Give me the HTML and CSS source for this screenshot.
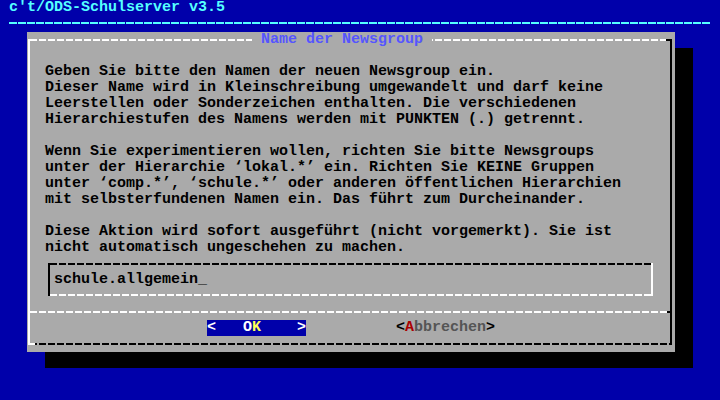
FILE: index.html
```html
<!DOCTYPE html>
<html lang="de">

<head>
    <meta charset="UTF-8">
    <meta name="viewport" content="width=device-width, initial-scale=1.0">
    <title>c't/ODS-Schulserver</title>
    <link rel="stylesheet" href="styles.css">
</head>

<body>
    <div class="screen">
        <div class="banner">c't/ODS-Schulserver v3.5</div>
        <div class="rule"></div>

        <!-- Eingabedialog -->
        <div class="dialog">
            <div class="frame">
                <div class="caption"> Name der Newsgroup </div>

                <p>Geben Sie bitte den Namen der neuen Newsgroup ein.<br>
                    Dieser Name wird in Kleinschreibung umgewandelt und darf keine<br>
                    Leerstellen oder Sonderzeichen enthalten. Die verschiedenen<br>
                    Hierarchiestufen des Namens werden mit PUNKTEN (.) getrennt.</p>

                <p>Wenn Sie experimentieren wollen, richten Sie bitte Newsgroups<br>
                    unter der Hierarchie ‘lokal.*’ ein. Richten Sie KEINE Gruppen<br>
                    unter ‘comp.*’, ‘schule.*’ oder anderen öffentlichen Hierarchien<br>
                    mit selbsterfundenen Namen ein. Das führt zum Durcheinander.</p>

                <p>Diese Aktion wird sofort ausgeführt (nicht vorgemerkt). Sie ist<br>
                    nicht automatisch ungeschehen zu machen.</p>

                <div class="field">schule.allgemein_</div>

                <div class="separator"></div>

                <div class="buttons">
                    <span class="btn active">&lt;   O<span class="hot">K</span>    &gt;</span>
                    <span class="btn">&lt;<span class="key">A</span><span class="dim">bbrechen</span>&gt;</span>
                </div>
            </div>
        </div>
    </div>
</body>

</html>
```

FILE: styles.css
```css
html,
body {
    margin: 0;
    padding: 0;
}

body {
    background-color: #0000aa;
    font-family: 'Liberation Mono', 'DejaVu Sans Mono', monospace;
    font-weight: bold;
    font-size: 15px;
    line-height: 16px;
}

.screen {
    width: 720px;
    height: 400px;
    overflow: hidden;
    background-color: #0000aa;
}

.banner {
    height: 16px;
    padding-left: 9px;
    color: #55ffff;
    white-space: pre;
}

.rule {
    height: 16px;
    margin: 0 9px;
    background: repeating-linear-gradient(to right, #55ffff 0 8px, transparent 8px 9px) 0 6px / 100% 2px no-repeat;
}

.dialog {
    width: 648px;
    height: 320px;
    margin-left: 27px;
    padding: 7px 3px 7px 1px;
    box-sizing: border-box;
    background-color: #aaaaaa;
    box-shadow: 18px 16px 0 #000;
}

.frame {
    position: relative;
    height: 306px;
    box-sizing: border-box;
    padding: 25px 0 0 15px;
    border-left: 2px solid #fff;
    border-right: 2px solid #000;
    background:
        linear-gradient(#000, #000) right top / 4px 2px no-repeat,
        linear-gradient(#fff, #fff) left bottom / 5px 2px no-repeat,
        repeating-linear-gradient(to right, #fff 0 7px, transparent 7px 9px) left top / 100% 2px no-repeat,
        repeating-linear-gradient(to right, #000 0 7px, transparent 7px 9px) left bottom / 100% 2px no-repeat;
}

/* title sits on the top border */
.caption {
    position: absolute;
    top: -7px;
    left: 222px;
    height: 16px;
    background-color: #aaaaaa;
    color: #5555ff;
    white-space: pre;
}

p {
    margin: 0 0 16px;
    color: #000;
    white-space: nowrap;
}

p:last-of-type {
    margin-bottom: 0;
}

.field {
    width: 605px;
    height: 33px;
    box-sizing: border-box;
    margin: 7px 0 0 3px;
    padding: 9px 0 0 4px;
    color: #000;
    border-left: 2px solid #000;
    border-right: 2px solid #fff;
    background:
        repeating-linear-gradient(to right, #000 0 7px, transparent 7px 9px) left top / 100% 2px no-repeat,
        repeating-linear-gradient(to right, #fff 0 7px, transparent 7px 9px) left bottom / 100% 2px no-repeat;
}

.separator {
    height: 2px;
    margin: 15px 0 0 -15px;
    background:
        linear-gradient(#000, #000) right top / 3px 2px no-repeat,
        repeating-linear-gradient(to right, #fff 0 7px, transparent 7px 9px);
}

.buttons {
    display: flex;
    gap: 90px;
    margin: 7px 0 0 162px;
}

.btn {
    width: 99px;
    height: 16px;
    white-space: pre;
    color: #000;
}

.btn.active {
    background-color: #0000aa;
    color: #fff;
}

.hot {
    color: #ffff55;
}

.key {
    color: #aa0000;
}

.dim {
    color: #555555;
}
```
